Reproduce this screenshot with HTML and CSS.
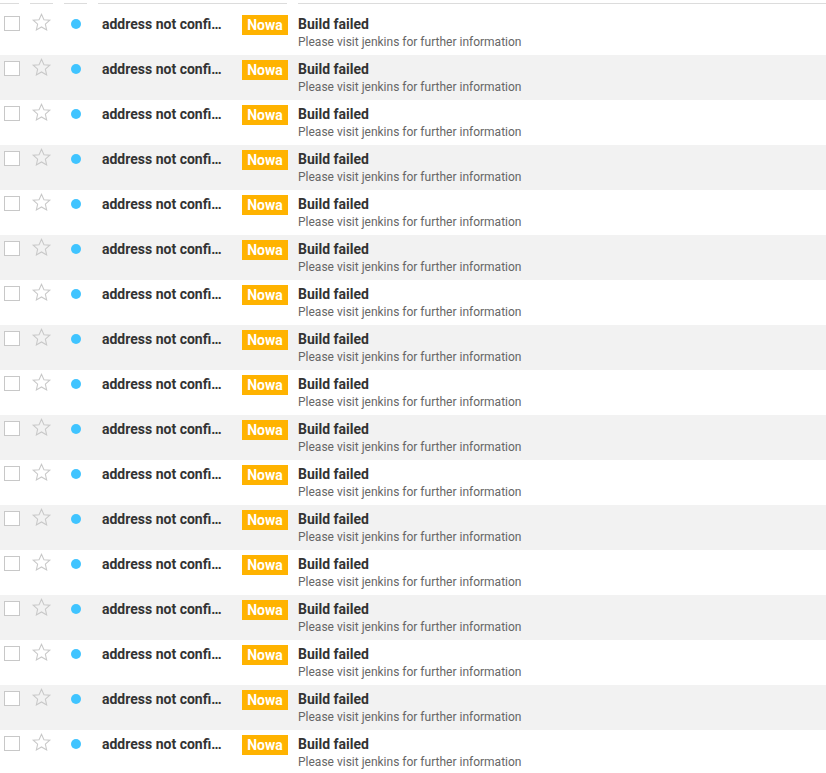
FILE: index.html
```html
<!DOCTYPE html>
<html>
<head>
<meta charset="utf-8">
<link rel="stylesheet" href="styles.css">
</head>
<body>
<div class="list">
  <div class="row head"><div class="h"></div><div class="h"></div><div class="h"></div><div class="h"></div><div class="h"></div></div>
  <div class="row item"><div class="c1"><span class="box"></span></div><div class="c2"><svg class="star" viewBox="0 0 24 24"><path d="M12 2.6l2.8 6.2 6.7.6-5.1 4.5 1.5 6.6L12 17.1l-5.9 3.4 1.5-6.6-5.1-4.5 6.7-.6z"/></svg></div><div class="c3"><span class="dot"></span></div><div class="c4"><span class="subj">address not confi…</span><span class="badge">Nowa</span></div><div class="c5"><div class="title">Build failed</div><div class="sub">Please visit jenkins for further information</div></div></div>
  <div class="row item"><div class="c1"><span class="box"></span></div><div class="c2"><svg class="star" viewBox="0 0 24 24"><path d="M12 2.6l2.8 6.2 6.7.6-5.1 4.5 1.5 6.6L12 17.1l-5.9 3.4 1.5-6.6-5.1-4.5 6.7-.6z"/></svg></div><div class="c3"><span class="dot"></span></div><div class="c4"><span class="subj">address not confi…</span><span class="badge">Nowa</span></div><div class="c5"><div class="title">Build failed</div><div class="sub">Please visit jenkins for further information</div></div></div>
  <div class="row item"><div class="c1"><span class="box"></span></div><div class="c2"><svg class="star" viewBox="0 0 24 24"><path d="M12 2.6l2.8 6.2 6.7.6-5.1 4.5 1.5 6.6L12 17.1l-5.9 3.4 1.5-6.6-5.1-4.5 6.7-.6z"/></svg></div><div class="c3"><span class="dot"></span></div><div class="c4"><span class="subj">address not confi…</span><span class="badge">Nowa</span></div><div class="c5"><div class="title">Build failed</div><div class="sub">Please visit jenkins for further information</div></div></div>
  <div class="row item"><div class="c1"><span class="box"></span></div><div class="c2"><svg class="star" viewBox="0 0 24 24"><path d="M12 2.6l2.8 6.2 6.7.6-5.1 4.5 1.5 6.6L12 17.1l-5.9 3.4 1.5-6.6-5.1-4.5 6.7-.6z"/></svg></div><div class="c3"><span class="dot"></span></div><div class="c4"><span class="subj">address not confi…</span><span class="badge">Nowa</span></div><div class="c5"><div class="title">Build failed</div><div class="sub">Please visit jenkins for further information</div></div></div>
  <div class="row item"><div class="c1"><span class="box"></span></div><div class="c2"><svg class="star" viewBox="0 0 24 24"><path d="M12 2.6l2.8 6.2 6.7.6-5.1 4.5 1.5 6.6L12 17.1l-5.9 3.4 1.5-6.6-5.1-4.5 6.7-.6z"/></svg></div><div class="c3"><span class="dot"></span></div><div class="c4"><span class="subj">address not confi…</span><span class="badge">Nowa</span></div><div class="c5"><div class="title">Build failed</div><div class="sub">Please visit jenkins for further information</div></div></div>
  <div class="row item"><div class="c1"><span class="box"></span></div><div class="c2"><svg class="star" viewBox="0 0 24 24"><path d="M12 2.6l2.8 6.2 6.7.6-5.1 4.5 1.5 6.6L12 17.1l-5.9 3.4 1.5-6.6-5.1-4.5 6.7-.6z"/></svg></div><div class="c3"><span class="dot"></span></div><div class="c4"><span class="subj">address not confi…</span><span class="badge">Nowa</span></div><div class="c5"><div class="title">Build failed</div><div class="sub">Please visit jenkins for further information</div></div></div>
  <div class="row item"><div class="c1"><span class="box"></span></div><div class="c2"><svg class="star" viewBox="0 0 24 24"><path d="M12 2.6l2.8 6.2 6.7.6-5.1 4.5 1.5 6.6L12 17.1l-5.9 3.4 1.5-6.6-5.1-4.5 6.7-.6z"/></svg></div><div class="c3"><span class="dot"></span></div><div class="c4"><span class="subj">address not confi…</span><span class="badge">Nowa</span></div><div class="c5"><div class="title">Build failed</div><div class="sub">Please visit jenkins for further information</div></div></div>
  <div class="row item"><div class="c1"><span class="box"></span></div><div class="c2"><svg class="star" viewBox="0 0 24 24"><path d="M12 2.6l2.8 6.2 6.7.6-5.1 4.5 1.5 6.6L12 17.1l-5.9 3.4 1.5-6.6-5.1-4.5 6.7-.6z"/></svg></div><div class="c3"><span class="dot"></span></div><div class="c4"><span class="subj">address not confi…</span><span class="badge">Nowa</span></div><div class="c5"><div class="title">Build failed</div><div class="sub">Please visit jenkins for further information</div></div></div>
  <div class="row item"><div class="c1"><span class="box"></span></div><div class="c2"><svg class="star" viewBox="0 0 24 24"><path d="M12 2.6l2.8 6.2 6.7.6-5.1 4.5 1.5 6.6L12 17.1l-5.9 3.4 1.5-6.6-5.1-4.5 6.7-.6z"/></svg></div><div class="c3"><span class="dot"></span></div><div class="c4"><span class="subj">address not confi…</span><span class="badge">Nowa</span></div><div class="c5"><div class="title">Build failed</div><div class="sub">Please visit jenkins for further information</div></div></div>
  <div class="row item"><div class="c1"><span class="box"></span></div><div class="c2"><svg class="star" viewBox="0 0 24 24"><path d="M12 2.6l2.8 6.2 6.7.6-5.1 4.5 1.5 6.6L12 17.1l-5.9 3.4 1.5-6.6-5.1-4.5 6.7-.6z"/></svg></div><div class="c3"><span class="dot"></span></div><div class="c4"><span class="subj">address not confi…</span><span class="badge">Nowa</span></div><div class="c5"><div class="title">Build failed</div><div class="sub">Please visit jenkins for further information</div></div></div>
  <div class="row item"><div class="c1"><span class="box"></span></div><div class="c2"><svg class="star" viewBox="0 0 24 24"><path d="M12 2.6l2.8 6.2 6.7.6-5.1 4.5 1.5 6.6L12 17.1l-5.9 3.4 1.5-6.6-5.1-4.5 6.7-.6z"/></svg></div><div class="c3"><span class="dot"></span></div><div class="c4"><span class="subj">address not confi…</span><span class="badge">Nowa</span></div><div class="c5"><div class="title">Build failed</div><div class="sub">Please visit jenkins for further information</div></div></div>
  <div class="row item"><div class="c1"><span class="box"></span></div><div class="c2"><svg class="star" viewBox="0 0 24 24"><path d="M12 2.6l2.8 6.2 6.7.6-5.1 4.5 1.5 6.6L12 17.1l-5.9 3.4 1.5-6.6-5.1-4.5 6.7-.6z"/></svg></div><div class="c3"><span class="dot"></span></div><div class="c4"><span class="subj">address not confi…</span><span class="badge">Nowa</span></div><div class="c5"><div class="title">Build failed</div><div class="sub">Please visit jenkins for further information</div></div></div>
  <div class="row item"><div class="c1"><span class="box"></span></div><div class="c2"><svg class="star" viewBox="0 0 24 24"><path d="M12 2.6l2.8 6.2 6.7.6-5.1 4.5 1.5 6.6L12 17.1l-5.9 3.4 1.5-6.6-5.1-4.5 6.7-.6z"/></svg></div><div class="c3"><span class="dot"></span></div><div class="c4"><span class="subj">address not confi…</span><span class="badge">Nowa</span></div><div class="c5"><div class="title">Build failed</div><div class="sub">Please visit jenkins for further information</div></div></div>
  <div class="row item"><div class="c1"><span class="box"></span></div><div class="c2"><svg class="star" viewBox="0 0 24 24"><path d="M12 2.6l2.8 6.2 6.7.6-5.1 4.5 1.5 6.6L12 17.1l-5.9 3.4 1.5-6.6-5.1-4.5 6.7-.6z"/></svg></div><div class="c3"><span class="dot"></span></div><div class="c4"><span class="subj">address not confi…</span><span class="badge">Nowa</span></div><div class="c5"><div class="title">Build failed</div><div class="sub">Please visit jenkins for further information</div></div></div>
  <div class="row item"><div class="c1"><span class="box"></span></div><div class="c2"><svg class="star" viewBox="0 0 24 24"><path d="M12 2.6l2.8 6.2 6.7.6-5.1 4.5 1.5 6.6L12 17.1l-5.9 3.4 1.5-6.6-5.1-4.5 6.7-.6z"/></svg></div><div class="c3"><span class="dot"></span></div><div class="c4"><span class="subj">address not confi…</span><span class="badge">Nowa</span></div><div class="c5"><div class="title">Build failed</div><div class="sub">Please visit jenkins for further information</div></div></div>
  <div class="row item"><div class="c1"><span class="box"></span></div><div class="c2"><svg class="star" viewBox="0 0 24 24"><path d="M12 2.6l2.8 6.2 6.7.6-5.1 4.5 1.5 6.6L12 17.1l-5.9 3.4 1.5-6.6-5.1-4.5 6.7-.6z"/></svg></div><div class="c3"><span class="dot"></span></div><div class="c4"><span class="subj">address not confi…</span><span class="badge">Nowa</span></div><div class="c5"><div class="title">Build failed</div><div class="sub">Please visit jenkins for further information</div></div></div>
  <div class="row item"><div class="c1"><span class="box"></span></div><div class="c2"><svg class="star" viewBox="0 0 24 24"><path d="M12 2.6l2.8 6.2 6.7.6-5.1 4.5 1.5 6.6L12 17.1l-5.9 3.4 1.5-6.6-5.1-4.5 6.7-.6z"/></svg></div><div class="c3"><span class="dot"></span></div><div class="c4"><span class="subj">address not confi…</span><span class="badge">Nowa</span></div><div class="c5"><div class="title">Build failed</div><div class="sub">Please visit jenkins for further information</div></div></div>
</div>
</body>
</html>
```

FILE: styles.css
```css
html, body {
  margin: 0;
  padding: 0;
  background: #fff;
  font-family: Roboto, "Liberation Sans", Arial, sans-serif;
  overflow: hidden;
}
.list {
  display: flex;
  flex-direction: column;
}
.row {
  display: grid;
  grid-template-columns: 19px 23px 23px 189px 1fr;
  column-gap: 11px;
}
.head {
  height: 10px;
}
.h {
  height: 3px;
  border-bottom: 1px solid #dcdcdc;
}
.item {
  height: 45px;
}
.item:nth-child(odd) {
  background: #f2f2f2;
}
.box {
  display: block;
  box-sizing: border-box;
  width: 16px;
  height: 15px;
  margin: 6px 0 0 4px;
  border: 1px solid #c8c8c8;
  background: #fff;
}
.star {
  display: block;
  width: 21px;
  height: 21px;
  margin: 2px 0 0 1px;
  fill: none;
  stroke: #c8c8c8;
  stroke-width: 1.2;
}
.dot {
  display: block;
  width: 10px;
  height: 10px;
  border-radius: 50%;
  background: #40c4ff;
  margin: 9px 0 0 7px;
}
.c4 {
  display: flex;
  align-items: flex-start;
  padding-left: 4px;
}
.subj {
  margin-top: 4px;
  font-size: 14px;
  line-height: 20px;
  font-weight: 700;
  color: #333;
  white-space: nowrap;
}
.badge {
  margin-left: auto;
  margin-top: 5px;
  margin-right: -1px;
  width: 46px;
  height: 20px;
  line-height: 20px;
  text-align: center;
  background: #ffb300;
  color: #fff;
  font-size: 14px;
  font-weight: 700;
}
.c5 {
  padding-top: 6px;
}
.title {
  font-size: 14px;
  line-height: 16px;
  font-weight: 700;
  color: #333;
}
.sub {
  margin-top: 2px;
  font-size: 12px;
  line-height: 16px;
  color: #666;
}
```
